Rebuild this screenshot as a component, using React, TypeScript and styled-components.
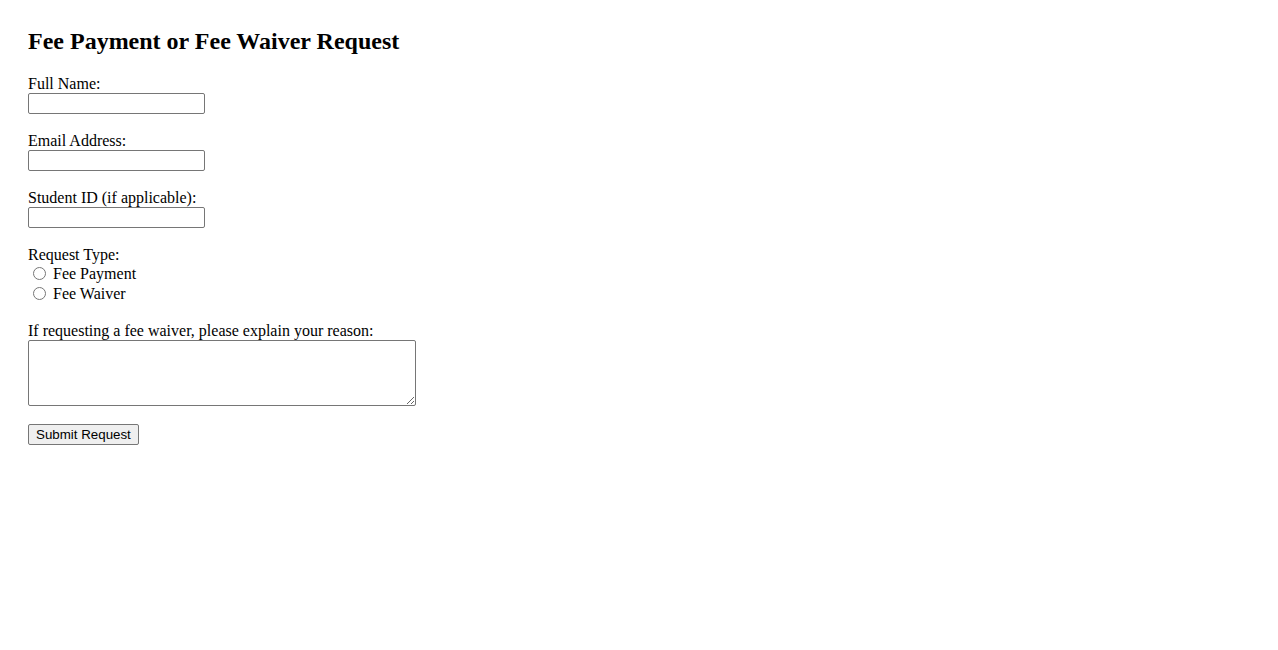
import React from "react";
import styled, { createGlobalStyle } from "styled-components";

const GlobalStyle = createGlobalStyle`
  body {
    margin: 8px;
    background: #ffffff;
    color: #000000;
    font-family: "Liberation Serif", "Times New Roman", serif;
    font-size: 16px;
  }
`;

const Page = styled.div`
  padding: 20px;
`;

const Title = styled.h2`
  font-size: 24px;
  font-weight: bold;
  line-height: 27px;
  margin: 0 0 20px 0;
`;

const Form = styled.form`
  display: flex;
  flex-direction: column;
  align-items: flex-start;
`;

const Field = styled.div`
  display: flex;
  flex-direction: column;
  align-items: flex-start;
  margin-bottom: 18px;
`;

const Label = styled.label`
  display: block;
  line-height: 18px;
`;

const TextInput = styled.input`
  box-sizing: border-box;
  width: 177px;
  height: 21px;
  padding: 1px 2px;
  margin: 0;
  border: 1px solid #767676;
  border-radius: 2px;
  font-family: "Liberation Sans", Arial, sans-serif;
  font-size: 13.33px;
`;

const RadioRow = styled.label`
  display: flex;
  align-items: center;
  height: 20px;
  line-height: 18px;
`;

const Radio = styled.input`
  width: 13px;
  height: 13px;
  margin: -2px 7px 0 5px;
`;

const TextArea = styled.textarea`
  box-sizing: border-box;
  width: 388px;
  height: 66px;
  margin: 0;
  padding: 2px;
  border: 1px solid #767676;
  border-radius: 2px;
  font-family: "Liberation Mono", monospace;
  font-size: 13.33px;
`;

const SubmitButton = styled.button`
  box-sizing: border-box;
  height: 21px;
  padding: 1px 7px;
  border: 1px solid #767676;
  border-radius: 2px;
  background: #efefef;
  color: #000000;
  font-family: "Liberation Sans", Arial, sans-serif;
  font-size: 13.33px;
`;

const textFields = [
  { id: "fullName", label: "Full Name:", type: "text" },
  { id: "email", label: "Email Address:", type: "email" },
  { id: "studentId", label: "Student ID (if applicable):", type: "text" },
];

export default function App() {
  return (
    <Page>
      <GlobalStyle />
      <Title>Fee Payment or Fee Waiver Request</Title>
      <Form onSubmit={(e) => e.preventDefault()}>
        {textFields.map((f) => (
          <Field key={f.id}>
            <Label htmlFor={f.id}>{f.label}</Label>
            <TextInput id={f.id} name={f.id} type={f.type} />
          </Field>
        ))}
        <Field>
          <Label>Request Type:</Label>
          <RadioRow>
            <Radio type="radio" name="requestType" value="payment" />
            Fee Payment
          </RadioRow>
          <RadioRow>
            <Radio type="radio" name="requestType" value="waiver" />
            Fee Waiver
          </RadioRow>
        </Field>
        <Field>
          <Label htmlFor="reason">If requesting a fee waiver, please explain your reason:</Label>
          <TextArea id="reason" name="reason" />
        </Field>
        <SubmitButton type="submit">Submit Request</SubmitButton>
      </Form>
    </Page>
  );
}
